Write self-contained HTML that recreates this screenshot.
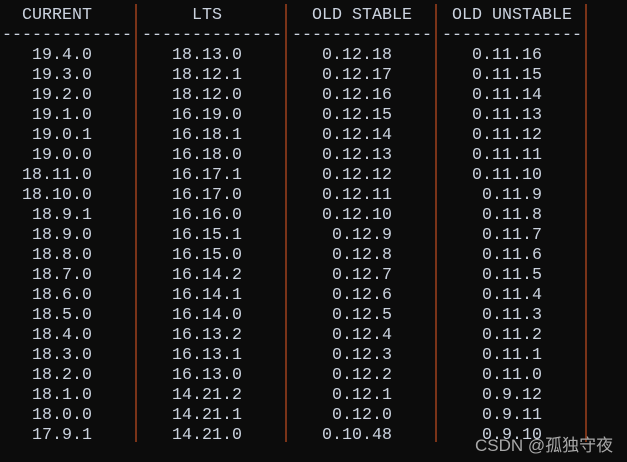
<!DOCTYPE html>
<html><head><meta charset="utf-8"><style>
html,body{margin:0;padding:0;background:#0c0c0c;width:627px;height:462px;overflow:hidden;position:relative}
pre{position:absolute;top:6px;margin:0;font-family:"Liberation Mono",monospace;font-size:16.67px;line-height:20px;color:#cbd3df}
.d{position:absolute;top:4px;width:2px;height:438px;background:#7a3318}
.w{position:absolute;left:475px;top:431px;font-family:"Liberation Sans","Noto Sans CJK SC",sans-serif;font-size:17px;color:#a8a8a8}
</style></head><body>
<div class="d" style="left:135px"></div>
<div class="d" style="left:285px"></div>
<div class="d" style="left:435px"></div>
<div class="d" style="left:585px"></div>
<pre style="left:2px">  CURRENT
-------------
   19.4.0
   19.3.0
   19.2.0
   19.1.0
   19.0.1
   19.0.0
  18.11.0
  18.10.0
   18.9.1
   18.9.0
   18.8.0
   18.7.0
   18.6.0
   18.5.0
   18.4.0
   18.3.0
   18.2.0
   18.1.0
   18.0.0
   17.9.1</pre>
<pre style="left:142px">     LTS
--------------
   18.13.0
   18.12.1
   18.12.0
   16.19.0
   16.18.1
   16.18.0
   16.17.1
   16.17.0
   16.16.0
   16.15.1
   16.15.0
   16.14.2
   16.14.1
   16.14.0
   16.13.2
   16.13.1
   16.13.0
   14.21.2
   14.21.1
   14.21.0</pre>
<pre style="left:292px">  OLD STABLE
--------------
   0.12.18
   0.12.17
   0.12.16
   0.12.15
   0.12.14
   0.12.13
   0.12.12
   0.12.11
   0.12.10
    0.12.9
    0.12.8
    0.12.7
    0.12.6
    0.12.5
    0.12.4
    0.12.3
    0.12.2
    0.12.1
    0.12.0
   0.10.48</pre>
<pre style="left:442px"> OLD UNSTABLE
--------------
   0.11.16
   0.11.15
   0.11.14
   0.11.13
   0.11.12
   0.11.11
   0.11.10
    0.11.9
    0.11.8
    0.11.7
    0.11.6
    0.11.5
    0.11.4
    0.11.3
    0.11.2
    0.11.1
    0.11.0
    0.9.12
    0.9.11
    0.9.10</pre>
<div class="w">CSDN @孤独守夜</div>
</body></html>
